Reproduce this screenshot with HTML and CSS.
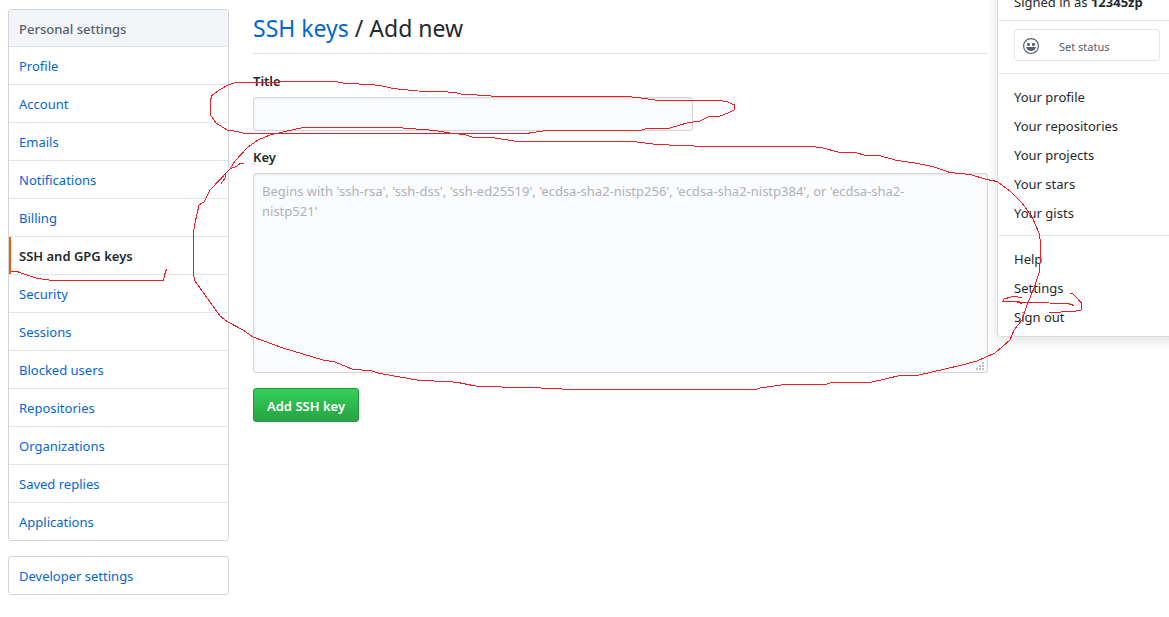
FILE: index.html
```html
<!DOCTYPE html>
<html lang="en">
<head>
<meta charset="utf-8">
<title>Add new SSH key</title>
<link rel="stylesheet" href="styles.css">
</head>
<body>
<div class="page">
  <div class="container">
    <aside class="sidebar">
      <nav class="menu" aria-label="Personal settings">
        <h2 class="menu-heading">Personal settings</h2>
        <a class="menu-item" href="#">Profile</a>
        <a class="menu-item" href="#">Account</a>
        <a class="menu-item" href="#">Emails</a>
        <a class="menu-item" href="#">Notifications</a>
        <a class="menu-item" href="#">Billing</a>
        <a class="menu-item selected" href="#" aria-current="page">SSH and GPG keys</a>
        <a class="menu-item" href="#">Security</a>
        <a class="menu-item" href="#">Sessions</a>
        <a class="menu-item" href="#">Blocked users</a>
        <a class="menu-item" href="#">Repositories</a>
        <a class="menu-item" href="#">Organizations</a>
        <a class="menu-item" href="#">Saved replies</a>
        <a class="menu-item" href="#">Applications</a>
      </nav>
      <nav class="menu" aria-label="Developer">
        <a class="menu-item" href="#">Developer settings</a>
      </nav>
    </aside>
    <main class="content">
      <h1 class="title"><a href="#">SSH keys</a> / Add new</h1>
      <form class="form">
        <div class="field">
          <label for="key-title">Title</label>
          <input class="control" id="key-title" type="text">
        </div>
        <div class="field">
          <label for="key-body">Key</label>
          <div class="textarea-wrap">
            <textarea class="control" id="key-body" placeholder="Begins with 'ssh-rsa', 'ssh-dss', 'ssh-ed25519', 'ecdsa-sha2-nistp256', 'ecdsa-sha2-nistp384', or 'ecdsa-sha2-nistp521'"></textarea>
            <svg class="grip" width="8" height="8" viewBox="0 0 8 8" aria-hidden="true"><path d="M6 0h2v2H6zM3 3h2v2H3zM6 3h2v2H6zM0 6h2v2H0zM3 6h2v2H3zM6 6h2v2H6z"/></svg>
          </div>
        </div>
        <button class="primary" type="button">Add SSH key</button>
      </form>
    </main>
  </div>

  <div class="dropdown">
    <a class="signed-in" href="#">Signed in as <strong>12345zp</strong></a>
    <div class="status">
      <button class="status-button" type="button">
        <svg width="16" height="16" viewBox="0 0 16 16" aria-hidden="true"><path fill-rule="evenodd" d="M8 0a8 8 0 1 0 0 16A8 8 0 0 0 8 0zm4.81 12.81a6.72 6.72 0 0 1-2.17 1.45c-.83.36-1.72.53-2.64.53-.92 0-1.81-.17-2.64-.53-.81-.34-1.55-.83-2.17-1.45a6.77 6.77 0 0 1-1.45-2.17A6.59 6.59 0 0 1 1.21 8c0-.92.17-1.81.53-2.64.34-.81.83-1.55 1.45-2.17.62-.62 1.36-1.11 2.17-1.45A6.59 6.59 0 0 1 8 1.21c.92 0 1.81.17 2.64.53.81.34 1.55.83 2.17 1.45.62.62 1.11 1.36 1.45 2.17.36.83.53 1.72.53 2.64 0 .92-.17 1.81-.53 2.64-.34.81-.83 1.55-1.45 2.17zM4 6.8v-.59c0-.66.53-1.19 1.2-1.19h.59c.66 0 1.19.53 1.19 1.19v.59c0 .67-.53 1.2-1.19 1.2H5.2C4.53 8 4 7.47 4 6.8zm5 0v-.59c0-.66.53-1.19 1.2-1.19h.59c.66 0 1.19.53 1.19 1.19v.59c0 .67-.53 1.2-1.19 1.2h-.59C9.53 8 9 7.47 9 6.8zm4 2.2c-.72 2.42-2.5 4-5 4s-4.28-1.58-5-4z"/></svg>
        <span>Set status</span>
      </button>
    </div>
    <div class="group">
      <a href="#">Your profile</a>
      <a href="#">Your repositories</a>
      <a href="#">Your projects</a>
      <a href="#">Your stars</a>
      <a href="#">Your gists</a>
    </div>
    <div class="group">
      <a href="#">Help</a>
      <a href="#">Settings</a>
      <a href="#">Sign out</a>
    </div>
  </div>

  <svg class="markup" width="1169" height="617" viewBox="0 0 1169 617" aria-hidden="true">
    <path d="M440 91.5L418 91L393 88.5L385 86.500L372 84.500L345 83.500L336 81.500H280L278 82.500H236L229 84.500L220 89.500L212 95.500L210.500 100V115L216 123L227 130L237 131.500L245 133.500H526L547 130.500H641L645 129L670 128L687 123L700 121L708 117L720 116L728 113L734 110L734.500 105L728 102L720 100.500H658L645 98.500L628 96.500H492L490 95.500L463 94.500L455 92.500Z"/>
    <path d="M221 183.500L225 178L226 173L230 169L237 166L240 163.500H244"/>
    <path d="M193.500 275V232L195 223L199 205L204 202L210 190L230 169L235 161L248 147L258 140L270 135L283 132L303 127.500H396L435 130.500L453 133.500L465 134.500L473 137.500H492L517 141.500H633L657 144.500L680 145.500L708 146.500H810L821 147.500L840 152.500H855L866 155.500H879L897 160.500L912 162.500L933 166.500L950 172.500L970 174.500L987 179.500L997 181.500L1010 191L1022 203L1032 217L1039 233L1040.500 242V258L1039 273L1034 288L1027 305L1022 320L1014 330L1010 340L995 353L977 361L960 365.500L917 375.500H900L870 382.500H832L825 384.500H785L760 388L755 389.500H566L557 388.500L525 387.500L478 386.500L458 382.500L448 381.500L420 380.500L380 373.500L370 370.500L353 369.500L335 362L323 360L303 354L283 348L253 337L243 330L228 322L220 316L195 281Z"/>
    <path d="M11 272L17 271.500L36 278L52 280.500H163.500L164.500 275L166.500 269"/>
    <path d="M1022 297.500L1013 296.500L1004 299L1002.500 301.500H1015L1022 303.500M1009 301.500L1030 302.500L1068 303.500L1074 305.500M1070 293.500L1073 294L1081.500 303V310L1073 311.500L1049 312.500"/>
  </svg>
</div>
</body>
</html>
```
FILE: styles.css
```css
* { box-sizing: border-box; }
body {
  margin: 0;
  background: #fff;
  color: #24292e;
  font: 13px/21px "Noto Sans", "Open Sans", sans-serif;
}
a { color: #0366d6; text-decoration: none; }
.page { position: relative; min-height: 100vh; overflow: hidden; }
.container {
  display: flex;
  gap: 24px;
  max-width: 996px;
  padding: 9px 8px 22px;
}
.sidebar { flex: 0 0 221px; display: flex; flex-direction: column; gap: 15px; }
.menu { border: 1px solid #d1d5da; border-radius: 3px; overflow: hidden; }
.menu-heading {
  margin: 0;
  padding: 9px 10px 6px;
  border-bottom: 1px solid #e1e4e8;
  background: #f3f5f9;
  color: #586069;
  font-size: 13px;
  font-weight: 500;
}
.menu-item { display: block; padding: 9px 10px 7px; border-bottom: 1px solid #e1e4e8; }
.menu-item:last-child { border-bottom: 0; padding-bottom: 7px; }
.menu-item.selected {
  color: #24292e;
  font-weight: 600;
  background: linear-gradient(#e36209, #e36209) left / 2px 100% no-repeat;
}
.content { flex: 1; min-width: 0; }
.title {
  margin: 0 0 17px;
  padding: 1px 0 7px;
  border-bottom: 1px solid #e1e4e8;
  font-size: 23px;
  line-height: 36px;
  font-weight: 400;
}
.field { margin-bottom: 16px; }
.field + .field { margin-bottom: 15px; }
.field label { display: block; margin-bottom: 5px; font-weight: 600; }
.control {
  display: block;
  width: 100%;
  padding: 7px 8px;
  border: 1px solid #d1d5da;
  border-radius: 3px;
  background: #fafbfc;
  box-shadow: inset 0 1px 2px rgba(27, 31, 35, 0.08);
  color: #24292e;
  font: inherit;
  line-height: 20px;
}
.control::placeholder { color: #adb2b8; }
input.control { max-width: 440px; height: 34px; }
textarea.control { height: 200px; padding-right: 48px; resize: none; }
.textarea-wrap { position: relative; }
.grip { position: absolute; right: 4px; bottom: 3px; fill: #bfbfbf; }
.primary {
  height: 34px;
  padding: 2px 13px 0;
  border: 1px solid #28903f;
  border-radius: 3px;
  background: linear-gradient(#34d058, #28a745 90%);
  color: #fff;
  font: inherit;
  font-weight: 600;
}
.dropdown {
  position: absolute;
  top: -12px;
  right: -12px;
  width: 184px;
  border: 1px solid #dadcde;
  border-radius: 4px;
  background: #fff;
  box-shadow: 0 3px 12px rgba(27, 31, 35, 0.15);
}
.dropdown a { display: block; padding: 5px 16px 3px; color: #24292e; }
.dropdown .signed-in { padding: 3px 16px 7px; }
.status {
  padding: 8px 20px 12px 16px;
  border: solid #e1e4e8;
  border-width: 1px 0;
}
.status-button {
  display: flex;
  align-items: center;
  gap: 20px;
  width: 100%;
  height: 32px;
  padding: 2px 8px 0;
  border: 1px solid #e1e4e8;
  border-radius: 3px;
  background: #fff;
  color: #586069;
  font: inherit;
  font-size: 11px;
}
.status-button svg { fill: #586069; }
.group { padding: 8px 0; }
.group:last-child { padding-bottom: 5px; border-top: 1px solid #e1e4e8; }
.markup {
  position: absolute;
  top: 0;
  left: 0;
  fill: none;
  stroke: #ed1c24;
  shape-rendering: crispEdges;
  pointer-events: none;
}
```
